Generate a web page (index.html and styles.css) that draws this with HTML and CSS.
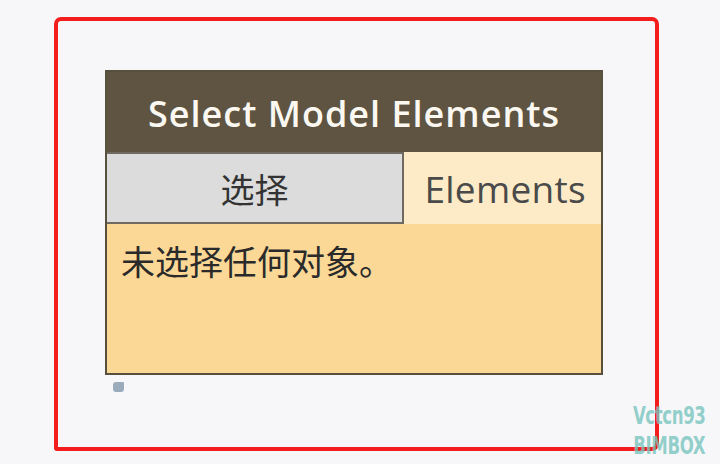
FILE: index.html
```html
<!DOCTYPE html>
<html lang="zh">
<head>
<meta charset="utf-8">
<link rel="stylesheet" href="styles.css">
</head>
<body>
<div class="frame">
  <div class="node">
    <div class="node-header">Select Model Elements</div>
    <div class="node-inputs">
      <div class="select-btn">选择</div>
      <div class="port-out">Elements</div>
    </div>
    <div class="node-body">未选择任何对象。</div>
  </div>
  <div class="pin"></div>
</div>
<div class="watermark">Vctcn93<br>BIMBOX</div>
</body>
</html>
```
FILE: styles.css
```css
html, body {
  margin: 0;
  padding: 0;
}
body {
  width: 720px;
  height: 464px;
  background: #f7f7f9;
  position: relative;
  overflow: hidden;
  font-family: "Open Sans", "Noto Sans CJK SC", sans-serif;
}
.frame {
  box-sizing: border-box;
  margin: 17px 0 0 54px;
  width: 605px;
  height: 434px;
  border: 4px solid #f31d1d;
  border-radius: 7px 7px 7px 3px;
  padding: 49px 0 0 47px;
}
.node {
  box-sizing: border-box;
  width: 498px;
  border: 2px solid #57503f;
  display: flex;
  flex-direction: column;
}
.node-header {
  height: 80px;
  background: #5e5441;
  color: #fbf8f1;
  font-weight: 600;
  font-size: 36px;
  letter-spacing: 1px;
  display: flex;
  align-items: center;
  justify-content: center;
  padding-top: 2px;
  box-sizing: border-box;
}
.node-inputs {
  display: flex;
  height: 72px;
}
.select-btn {
  box-sizing: border-box;
  width: 297px;
  background: #dcdcdc;
  border: 2px solid #6e6a62;
  border-left: none;
  color: #333;
  font-family: "Noto Sans CJK SC", sans-serif;
  font-size: 34px;
  display: flex;
  align-items: center;
  justify-content: center;
}
.port-out {
  flex: 1;
  background: #fdeac7;
  color: #4a4a4a;
  font-size: 37px;
  letter-spacing: 0.3px;
  display: flex;
  align-items: center;
  justify-content: flex-end;
  padding-right: 15px;
}
.node-body {
  height: 149px;
  background: #fbd896;
  color: #2a2a2a;
  font-family: "Noto Sans CJK SC", sans-serif;
  font-size: 34px;
  padding: 12px 0 0 14px;
  box-sizing: border-box;
}
.pin {
  width: 11px;
  height: 10px;
  margin: 7px 0 0 8px;
  background: #9aacbb;
  border-radius: 3px 1px 3px 3px;
}
.watermark {
  position: absolute;
  left: 626px;
  top: 404px;
  color: rgba(120, 196, 190, 0.8);
  font-family: "DejaVu Sans Condensed", "DejaVu Sans", sans-serif;
  font-weight: bold;
  font-size: 22px;
  line-height: 27px;
  text-align: center;
  letter-spacing: -0.5px;
  transform: scale(0.84, 1.1);
  transform-origin: center;
}
```
